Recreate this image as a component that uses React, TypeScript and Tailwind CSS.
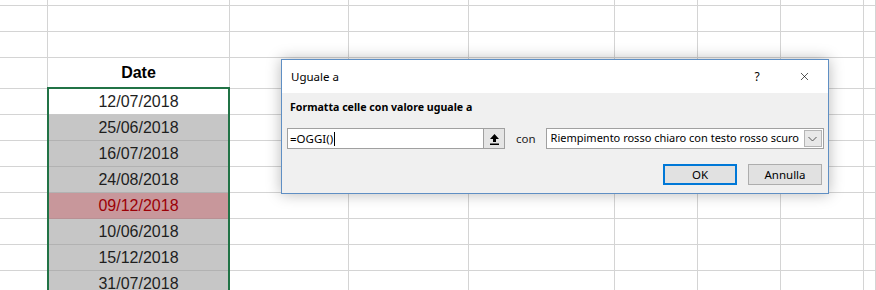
import { X } from 'lucide-react';

const colWidths = ['w-[48px]', 'w-[182px]', 'w-[119px]', 'w-[120px]', 'w-[146px]', 'w-[83px]', 'w-[83px]', 'w-[83px]', 'flex-1'];

type Row = { h: string; text?: string; kind?: 'header' | 'white' | 'gray' | 'red' };

const rows: Row[] = [
  { h: 'h-[6px]' },
  { h: 'h-[26px]' },
  { h: 'h-[26px]' },
  { h: 'h-[31px]', text: 'Date', kind: 'header' },
  { h: 'h-[26px]', text: '12/07/2018', kind: 'white' },
  { h: 'h-[26px]', text: '25/06/2018', kind: 'gray' },
  { h: 'h-[26px]', text: '16/07/2018', kind: 'gray' },
  { h: 'h-[26px]', text: '24/08/2018', kind: 'gray' },
  { h: 'h-[26px]', text: '09/12/2018', kind: 'red' },
  { h: 'h-[26px]', text: '10/06/2018', kind: 'gray' },
  { h: 'h-[26px]', text: '15/12/2018', kind: 'gray' },
  { h: 'h-[26px]', text: '31/07/2018', kind: 'gray' },
  { h: 'h-[26px]', text: '', kind: 'gray' },
];

function dateCell(row: Row) {
  if (row.kind === 'header') {
    return <span className="font-bold text-black">{row.text}</span>;
  }
  return <span>{row.text}</span>;
}

function cellClass(row: Row) {
  switch (row.kind) {
    case 'gray':
      return 'bg-[#c6c6c6] border-b-[#b2b2b2] text-[#1e1e1e]';
    case 'red':
      return 'bg-[#c8979b] border-b-[#b89094] text-[#9c0006]';
    case 'white':
      return 'bg-white border-b-[#c8c8c8] text-[#1e1e1e]';
    default:
      return 'bg-white border-b-[#d4d4d4]';
  }
}

function Sheet() {
  return (
    <div className="flex flex-col font-['Liberation_Sans',Arial,sans-serif] text-[16px]">
      {rows.map((row, r) => (
        <div key={r} className={`flex ${row.h} shrink-0`}>
          {colWidths.map((w, c) => (
            <div
              key={c}
              className={`${w} h-full shrink-0 border-b border-r border-[#d4d4d4] flex items-center justify-center ${
                c === 1 ? cellClass(row) : 'bg-white'
              }`}
            >
              {c === 1 && row.text ? dateCell(row) : null}
            </div>
          ))}
        </div>
      ))}
    </div>
  );
}

function UploadArrow() {
  return (
    <svg width="11" height="12" viewBox="0 0 11 12">
      <path d="M5.5 1 L1 6 H4 V9 H7 V6 H10 Z" fill="#000" />
      <rect x="1" y="10.5" width="9" height="1.5" fill="#000" />
    </svg>
  );
}

function Dialog() {
  return (
    <div className="absolute left-[281px] top-[59px] w-[548px] h-[135px] border border-[#5f8fc4] bg-[#f0f0f0] shadow-[0_0_14px_rgba(0,0,0,0.28)] flex flex-col font-['Noto_Sans',sans-serif] text-[11px] text-black">
      <div className="h-[33px] bg-white flex items-center pl-[9px] pr-[17px]">
        <span className="flex-1 text-[11.5px]">Uguale a</span>
        <span className="w-[14px] text-center text-[12px] mr-[34px]">?</span>
        <X className="w-[13px] h-[13px]" strokeWidth={1.2} />
      </div>
      <div className="px-[8px] pt-[5px] font-bold text-[10.6px] h-[25px] flex items-center">
        Formatta celle con valore uguale a
      </div>
      <div className="flex items-center mt-[10px] pl-[5px]">
        <div className="w-[218px] h-[21px] bg-white border border-[#a0a0a0] flex items-center">
          <span className="flex-1 pl-[2px] flex items-center text-[11.5px]">
            =OGGI()
            <span className="inline-block w-px h-[14px] bg-black ml-[1px]" />
          </span>
          <div className="w-[21px] h-full bg-[#e5e5e5] border-l border-[#a0a0a0] flex items-center justify-center">
            <UploadArrow />
          </div>
        </div>
        <span className="ml-[11px] text-[11.5px] text-[#222]">con</span>
        <div className="ml-[10px] w-[278px] h-[21px] bg-white border border-[#a0a0a0] flex items-center pl-[4px] pr-[1px]">
          <span className="flex-1 min-w-0 overflow-hidden text-[11px] whitespace-nowrap">Riempimento rosso chiaro con testo rosso scuro</span>
          <div className="w-[18px] h-[17px] shrink-0 bg-[#e8e8e8] border border-[#b5b5b5] flex items-center justify-center">
            <svg width="9" height="6" viewBox="0 0 9 6">
              <path d="M0.5 1 L4.5 5 L8.5 1" fill="none" stroke="#555" strokeWidth="1" />
            </svg>
          </div>
        </div>
      </div>
      <div className="flex justify-end gap-[11px] mt-[15px] pr-[6px]">
        <button className="w-[74px] h-[21px] bg-[#e1e1e1] border-2 border-[#0078d7] text-[11.5px] flex items-center justify-center">
          OK
        </button>
        <button className="w-[74px] h-[21px] bg-[#e1e1e1] border border-[#adadad] text-[11.5px] flex items-center justify-center">
          Annulla
        </button>
      </div>
    </div>
  );
}

export default function App() {
  return (
    <div className="relative w-[876px] h-[290px] overflow-hidden bg-white">
      <Sheet />
      {/* selection border */}
      <div className="absolute left-[47px] top-[87px] w-[183px] h-[220px] border-2 border-[#217346]" />
      <Dialog />
    </div>
  );
}
